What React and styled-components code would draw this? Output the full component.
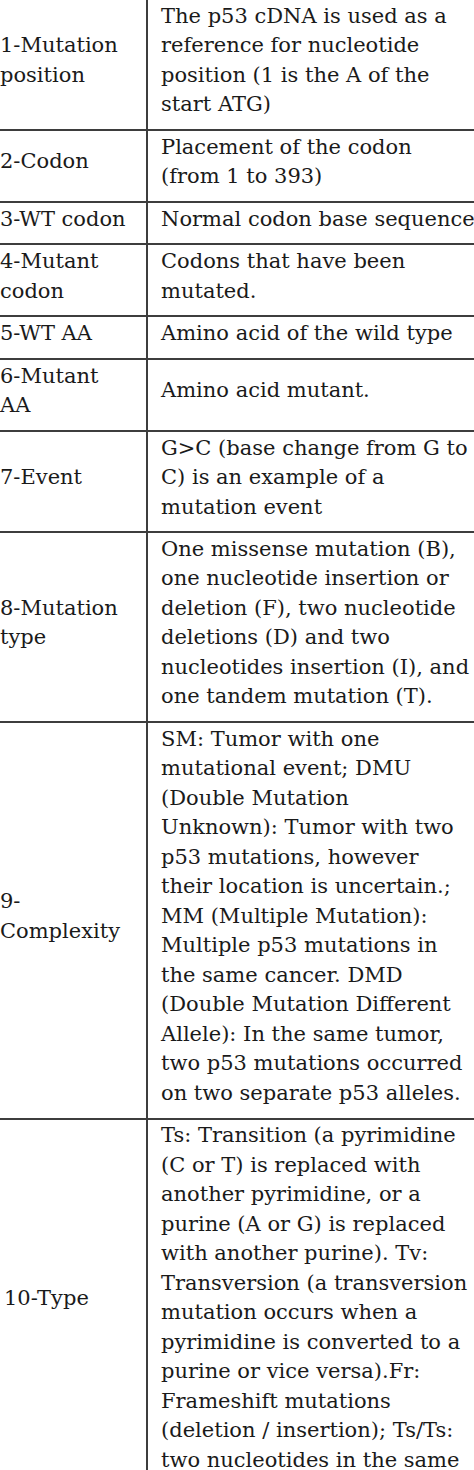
import React from "react";
import styled, { createGlobalStyle } from "styled-components";

const Global = createGlobalStyle`
  html, body {
    margin: 0;
    padding: 0;
    background: #ffffff;
    overflow: hidden;
  }
  body {
    width: 474px;
    height: 1470px;
  }
`;

const Table = styled.div`
  display: flex;
  flex-direction: column;
  width: 474px;
  overflow: hidden;
  font-family: "DejaVu Serif", "Liberation Serif", serif;
  font-size: 21px;
  line-height: 29.5px;
  color: #1a1a1a;
`;

const Row = styled.div`
  display: flex;
  align-items: stretch;
  border-bottom: 2px solid #3d3d3d;
  &:last-child {
    border-bottom: none;
  }
`;

const LabelCell = styled.div`
  flex: 0 0 148px;
  display: flex;
  flex-direction: column;
  justify-content: center;
  padding: 1.6px 0 9.4px ${(p) => p.$indent || 0}px;
  border-right: 2px solid #3d3d3d;
  box-sizing: border-box;
  white-space: nowrap;
`;

const DescCell = styled.div`
  flex: 1 1 auto;
  min-width: 0;
  display: flex;
  flex-direction: column;
  justify-content: center;
  padding: 1.6px 0 9.4px 13px;
  white-space: nowrap;
  overflow: hidden;
`;

const Line = styled.span`
  display: block;
`;

const rows = [
  {
    label: ["1-Mutation", "position"],
    desc: [
      "The p53 cDNA is used as a",
      "reference for nucleotide",
      "position (1 is the A of the",
      "start ATG)",
    ],
  },
  { label: ["2-Codon"], desc: ["Placement of the codon", "(from 1 to 393)"] },
  { label: ["3-WT codon"], desc: ["Normal codon base sequence"] },
  { label: ["4-Mutant", "codon"], desc: ["Codons that have been", "mutated."] },
  { label: ["5-WT AA"], desc: ["Amino acid of the wild type"] },
  { label: ["6-Mutant", "AA"], desc: ["Amino acid mutant."] },
  {
    label: ["7-Event"],
    desc: ["G>C (base change from G to", "C) is an example of a", "mutation event"],
  },
  {
    label: ["8-Mutation", "type"],
    desc: [
      "One missense mutation (B),",
      "one nucleotide insertion or",
      "deletion (F), two nucleotide",
      "deletions (D) and two",
      "nucleotides insertion (I), and",
      "one tandem mutation (T).",
    ],
  },
  {
    label: ["9-", "Complexity"],
    desc: [
      "SM: Tumor with one",
      "mutational event; DMU",
      "(Double Mutation",
      "Unknown): Tumor with two",
      "p53 mutations, however",
      "their location is uncertain.;",
      "MM (Multiple Mutation):",
      "Multiple p53 mutations in",
      "the same cancer. DMD",
      "(Double Mutation Different",
      "Allele): In the same tumor,",
      "two p53 mutations occurred",
      "on two separate p53 alleles.",
    ],
  },
  {
    label: ["10-Type"],
    indent: 4,
    desc: [
      "Ts: Transition (a pyrimidine",
      "(C or T) is replaced with",
      "another pyrimidine, or a",
      "purine (A or G) is replaced",
      "with another purine). Tv:",
      "Transversion (a transversion",
      "mutation occurs when a",
      "pyrimidine is converted to a",
      "purine or vice versa).Fr:",
      "Frameshift mutations",
      "(deletion / insertion); Ts/Ts:",
      "two nucleotides in the same",
    ],
  },
];

export default function App() {
  return (
    <>
      <Global />
      <Table>
        {rows.map((r, i) => (
          <Row key={i}>
            <LabelCell $indent={r.indent}>
              {r.label.map((t, j) => (
                <Line key={j}>{t}</Line>
              ))}
            </LabelCell>
            <DescCell>
              {r.desc.map((t, j) => (
                <Line key={j}>{t}</Line>
              ))}
            </DescCell>
          </Row>
        ))}
      </Table>
    </>
  );
}
